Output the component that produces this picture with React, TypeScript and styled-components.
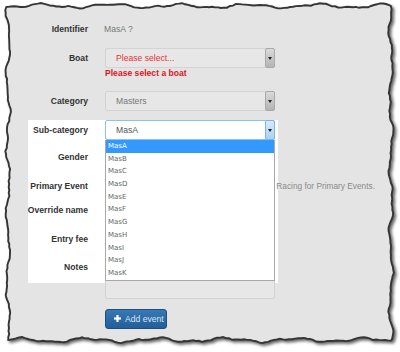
import React from "react";
import styled, { createGlobalStyle } from "styled-components";

const GlobalStyle = createGlobalStyle`
  html, body {
    margin: 0;
    padding: 0;
    background: #ffffff;
  }
  body {
    font-family: "Liberation Sans", Arial, sans-serif;
  }
`;

const Frame = styled.div`
  position: relative;
  width: 400px;
  height: 352px;
  background: #ffffff;
  overflow: hidden;
`;

const Paper = styled.svg`
  position: absolute;
  left: 0;
  top: 0;
  width: 400px;
  height: 352px;
  filter: drop-shadow(2px 2.5px 1.5px rgba(0, 0, 0, 0.6));
`;

const Sheet = styled.div`
  position: relative;
  padding: 19px 0 0 28px;
`;

const Row = styled.div<{ $gap?: number; $h?: number; $top?: boolean }>`
  display: grid;
  grid-template-columns: 60px 170px;
  column-gap: 17px;
  align-items: ${({ $top }) => ($top ? "start" : "center")};
  height: ${({ $h }) => $h ?? 20}px;
  margin-top: ${({ $gap }) => $gap ?? 0}px;
`;

const Label = styled.div`
  display: flex;
  justify-content: flex-end;
  height: 20px;
  align-items: center;
  white-space: nowrap;
  font-size: 8.6px;
  font-weight: bold;
  color: #333333;
`;

const Value = styled.div`
  font-size: 8.6px;
  color: #777777;
  margin-left: -1px;
`;

const Select = styled.div<{ $focus?: boolean; $tone?: string }>`
  position: relative;
  box-sizing: border-box;
  height: 20px;
  display: flex;
  align-items: center;
  padding-left: 10px;
  font-size: 8.6px;
  color: ${({ $tone }) => $tone ?? "#777777"};
  background: ${({ $focus }) => ($focus ? "#ffffff" : "#e7e7e7")};
  border: 1px solid ${({ $focus }) => ($focus ? "#8cc3ee" : "#d3d3d3")};
  border-radius: 2px;
`;

const Caret = styled.span<{ $focus?: boolean }>`
  position: absolute;
  right: -1px;
  top: -1px;
  bottom: -1px;
  width: 10px;
  box-sizing: border-box;
  border: 1px solid ${({ $focus }) => ($focus ? "#7fb6e3" : "#a9a9a9")};
  border-radius: 2px;
  background: ${({ $focus }) =>
    $focus
      ? "linear-gradient(#d7ebfa, #a9d2f1)"
      : "linear-gradient(#dadada, #b4b4b4)"};
  display: flex;
  align-items: center;
  justify-content: center;

  &::after {
    content: "";
    border-left: 2.5px solid transparent;
    border-right: 2.5px solid transparent;
    border-top: 3px solid #222222;
  }
`;

const ErrorText = styled.div`
  grid-column: 2;
  height: 11px;
  line-height: 11px;
  font-size: 8.6px;
  font-weight: bold;
  color: #e0141e;
`;

const Spot = styled.div`
  margin-top: 9px;
  width: 250px;
  height: 163px;
  background: #ffffff;
`;

const Control = styled.div`
  position: relative;
`;

const Menu = styled.ul`
  position: absolute;
  left: 0;
  top: 20px;
  width: 170px;
  box-sizing: border-box;
  margin: 0;
  padding: 0;
  list-style: none;
  background: #ffffff;
  border: 1px solid #a8a8a8;
  border-top: none;
  z-index: 2;
`;

const Option = styled.li<{ $active?: boolean }>`
  height: 12.7px;
  line-height: 12.7px;
  padding-left: 2px;
  font-family: "DejaVu Sans", Verdana, sans-serif;
  font-size: 7px;
  color: ${({ $active }) => ($active ? "#ffffff" : "#666666")};
  background: ${({ $active }) => ($active ? "#3399ff" : "transparent")};
`;

const Help = styled.div`
  width: 270px;
  text-align: right;
  white-space: nowrap;
  font-size: 8.3px;
  color: #8a8a8a;
`;

const Notes = styled.div`
  box-sizing: border-box;
  height: 42px;
  background: #e7e7e7;
  border: 1px solid #d3d3d3;
  border-radius: 2px;
`;

const Actions = styled.div`
  margin: 25px 0 0 77px;
`;

const Button = styled.button`
  display: inline-flex;
  align-items: center;
  gap: 4px;
  box-sizing: border-box;
  width: 62px;
  height: 20px;
  padding: 0 0 0 8px;
  border: 1px solid #1d4f80;
  border-radius: 3px;
  background: linear-gradient(#3677b5, #235f99);
  color: #d9e6f3;
  font-family: "Liberation Sans", Arial, sans-serif;
  font-size: 8.6px;
`;

const rand = (i: number) => {
  const v = Math.sin(i * 12.9898 + 4.1) * 43758.5453;
  return v - Math.floor(v);
};

// wavy offset for the torn paper edge
const wave = (s: number, k: number) =>
  1.7 * Math.sin(s / 11 + k) + 0.9 * Math.sin(s / 4.5 + k * 2) + (rand(s + k * 97) - 0.5) * 1.1;

const tornPath = (l: number, t: number, r: number, b: number) => {
  const pts: string[] = [];
  for (let x = l; x < r; x += 3) pts.push(`${x},${(t + wave(x, 1)).toFixed(1)}`);
  for (let y = t; y < b; y += 3) pts.push(`${(r + wave(y, 2)).toFixed(1)},${y}`);
  for (let x = r; x > l; x -= 3) pts.push(`${x},${(b + wave(x, 3)).toFixed(1)}`);
  for (let y = b; y > t; y -= 3) pts.push(`${(l + wave(y, 4)).toFixed(1)},${y}`);
  return `M${pts.join("L")}Z`;
};

const options = ["MasA", "MasB", "MasC", "MasD", "MasE", "MasF", "MasG", "MasH", "MasI", "MasJ", "MasK"];

export default function App() {
  const edge = tornPath(8, 6, 391, 340);
  return (
    <Frame>
      <GlobalStyle />
      <Paper viewBox="0 0 400 352">
        <path d={edge} fill="#e4e4e4" stroke="#353535" strokeWidth={1.9} />
      </Paper>
      <Sheet>
        <Row>
          <Label>Identifier</Label>
          <Value>MasA ?</Value>
        </Row>
        <Row $gap={9}>
          <Label>Boat</Label>
          <Select $tone="#e8323a">
            Please select...
            <Caret />
          </Select>
        </Row>
        <Row $h={11}>
          <ErrorText>Please select a boat</ErrorText>
        </Row>
        <Row $gap={12}>
          <Label>Category</Label>
          <Select>
            Masters
            <Caret />
          </Select>
        </Row>
        <Spot>
          <Row>
            <Label>Sub-category</Label>
            <Control>
              <Select $focus $tone="#555555">
                MasA
                <Caret $focus />
              </Select>
              <Menu>
                {options.map((o, i) => (
                  <Option key={o} $active={i === 0}>
                    {o}
                  </Option>
                ))}
              </Menu>
            </Control>
          </Row>
          <Row $gap={7}>
            <Label>Gender</Label>
            <Select />
          </Row>
          <Row $gap={9}>
            <Label>Primary Event</Label>
            <Help>Used by Racing for Primary Events.</Help>
          </Row>
          <Row $gap={4}>
            <Label>Override name</Label>
            <Select />
          </Row>
          <Row $gap={9}>
            <Label>Entry fee</Label>
            <Select />
          </Row>
          <Row $gap={8} $h={42} $top>
            <Label>Notes</Label>
            <Notes />
          </Row>
        </Spot>
        <Actions>
          <Button>
            <svg width="7" height="7" viewBox="0 0 7 7">
              <rect x="2.4" y="0" width="2.2" height="7" fill="#ffffff" />
              <rect x="0" y="2.4" width="7" height="2.2" fill="#ffffff" />
            </svg>
            Add event
          </Button>
        </Actions>
      </Sheet>
    </Frame>
  );
}
